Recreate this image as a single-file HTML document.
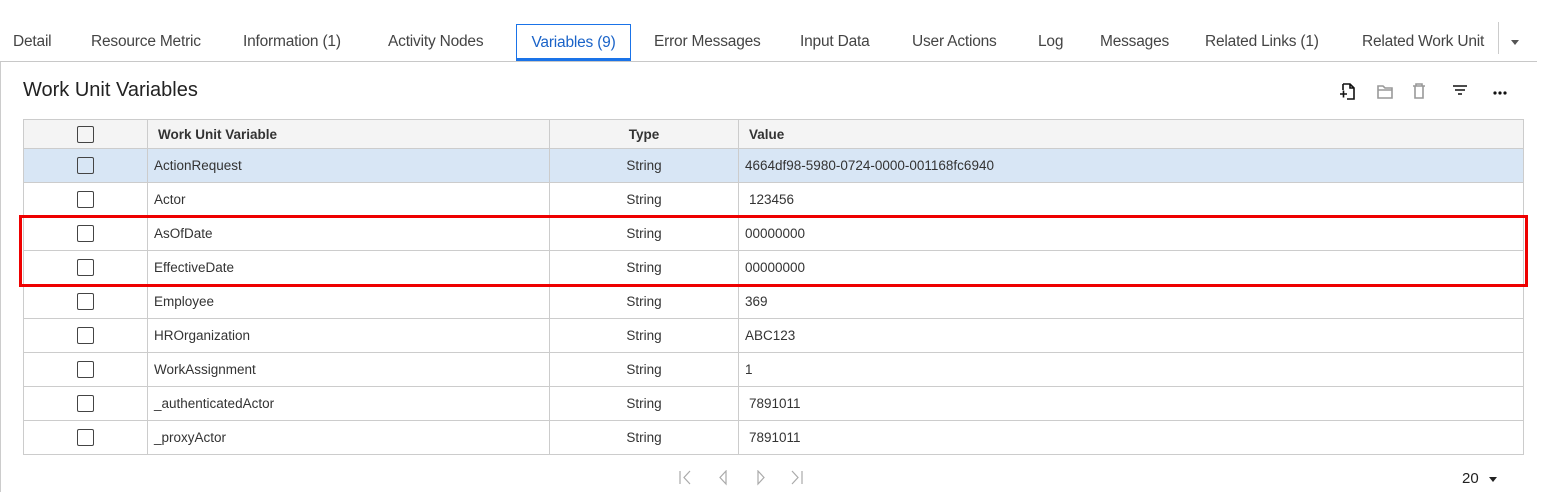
<!DOCTYPE html>
<html><head><style>
body{margin:0;width:1547px;height:492px;background:#fff;font-family:"Liberation Sans",sans-serif;color:#333;position:relative;overflow:hidden}
.tabs{position:absolute;left:0;top:0;width:1537px;height:61px;border-bottom:1px solid #c8c8c8}
.tab{position:absolute;top:33px;font-size:15.5px;color:#444;white-space:nowrap;letter-spacing:-0.2px}
.act{position:absolute;left:516px;top:24px;width:113px;height:33px;border:1px solid #1a73e8;border-bottom:3px solid #1a73e8;color:#1a63c8;font-size:15.5px;text-align:center;line-height:35px;letter-spacing:-0.2px}
.lb{position:absolute;left:0;top:62px;width:1px;height:430px;background:#ccc}
h1{position:absolute;left:23px;top:79px;margin:0;font-weight:normal;font-size:20px;color:#222}
table{position:absolute;left:23px;top:119px;width:1501px;border-collapse:collapse;table-layout:fixed;font-size:13.5px;color:#333}
td,th{border:1px solid #ccc;height:33px;padding:0 6px}
th{height:28px;background:#f4f4f4;text-align:left;font-weight:bold;font-size:13.5px}
.c{text-align:center}
.t{text-align:center}
.cb{display:inline-block;width:15px;height:15px;border:1px solid #444;border-radius:2px;vertical-align:middle}
tr.sel td{background:#d8e6f5}
.red{position:absolute;left:19px;top:215px;width:1503px;height:66px;border:3px solid #e00}
</style></head><body>
<div class="tabs">
<span class="tab" style="left:13px">Detail</span>
<span class="tab" style="left:91px">Resource Metric</span>
<span class="tab" style="left:243px">Information (1)</span>
<span class="tab" style="left:388px">Activity Nodes</span>
<div class="act">Variables (9)</div>
<span class="tab" style="left:654px">Error Messages</span>
<span class="tab" style="left:800px">Input Data</span>
<span class="tab" style="left:912px">User Actions</span>
<span class="tab" style="left:1038px">Log</span>
<span class="tab" style="left:1100px">Messages</span>
<span class="tab" style="left:1205px">Related Links (1)</span>
<span class="tab" style="left:1362px;width:124px;overflow:hidden">Related Work Unit</span>
<div style="position:absolute;left:1498px;top:22px;width:1px;height:32px;background:#ccc"></div>
<div style="position:absolute;left:1511px;top:40px;border:4px solid transparent;border-top:5px solid #555"></div>
</div>
<div class="lb"></div>
<h1>Work Unit Variables</h1>
<svg style="position:absolute;left:1338px;top:80px" width="180" height="22" fill="none" stroke-width="1.6">
<g stroke="#111"><path d="M5 4h7l4 4v11h-7M5 4v6M12 4v4h4M2 14h7M5.5 10.5v7"/></g>
<g stroke="#999"><path d="M40 6h5l2 2h7v10h-14z M40 10h14"/><path d="M78 6v-2h6v2M75 6h12M77 6v12h8v-12"/></g>
<g stroke="#111"><path d="M115 6h14M117 10h10M120 14h4"/></g>
<g fill="#111" stroke="none"><circle cx="157" cy="13" r="1.6"/><circle cx="162" cy="13" r="1.6"/><circle cx="167" cy="13" r="1.6"/></g>
</svg>
<table>
<colgroup><col style="width:124px"><col style="width:402px"><col style="width:189px"><col></colgroup>
<tr><th class="c"><span class="cb"></span></th><th style="padding-left:10px">Work Unit Variable</th><th class="t" style="text-align:center">Type</th><th style="padding-left:10px">Value</th></tr>
<tr class="sel"><td class="c"><span class="cb"></span></td><td>ActionRequest</td><td class="t">String</td><td>4664df98-5980-0724-0000-001168fc6940</td></tr>
<tr><td class="c"><span class="cb"></span></td><td>Actor</td><td class="t">String</td><td style="padding-left:10px">123456</td></tr>
<tr><td class="c"><span class="cb"></span></td><td>AsOfDate</td><td class="t">String</td><td>00000000</td></tr>
<tr><td class="c"><span class="cb"></span></td><td>EffectiveDate</td><td class="t">String</td><td>00000000</td></tr>
<tr><td class="c"><span class="cb"></span></td><td>Employee</td><td class="t">String</td><td>369</td></tr>
<tr><td class="c"><span class="cb"></span></td><td>HROrganization</td><td class="t">String</td><td>ABC123</td></tr>
<tr><td class="c"><span class="cb"></span></td><td>WorkAssignment</td><td class="t">String</td><td>1</td></tr>
<tr><td class="c"><span class="cb"></span></td><td>_authenticatedActor</td><td class="t">String</td><td style="padding-left:10px">7891011</td></tr>
<tr><td class="c"><span class="cb"></span></td><td>_proxyActor</td><td class="t">String</td><td style="padding-left:10px">7891011</td></tr>
</table>
<div class="red"></div>
<svg style="position:absolute;left:678px;top:470px" width="130" height="16" fill="none" stroke="#aaa" stroke-width="1.2">
<path d="M2 1v13M12 1l-6 6.5 6 6.5"/><path d="M48 1l-6 6.5 6 6.5z"/><path d="M80 1l6 6.5-6 6.5z"/><path d="M114 1l6 6.5-6 6.5M124 1v13"/>
</svg>
<span style="position:absolute;left:1462px;top:470px;font-size:15px;color:#222">20</span>
<div style="position:absolute;left:1489px;top:477px;border:4px solid transparent;border-top:5px solid #222"></div>
</body></html>
